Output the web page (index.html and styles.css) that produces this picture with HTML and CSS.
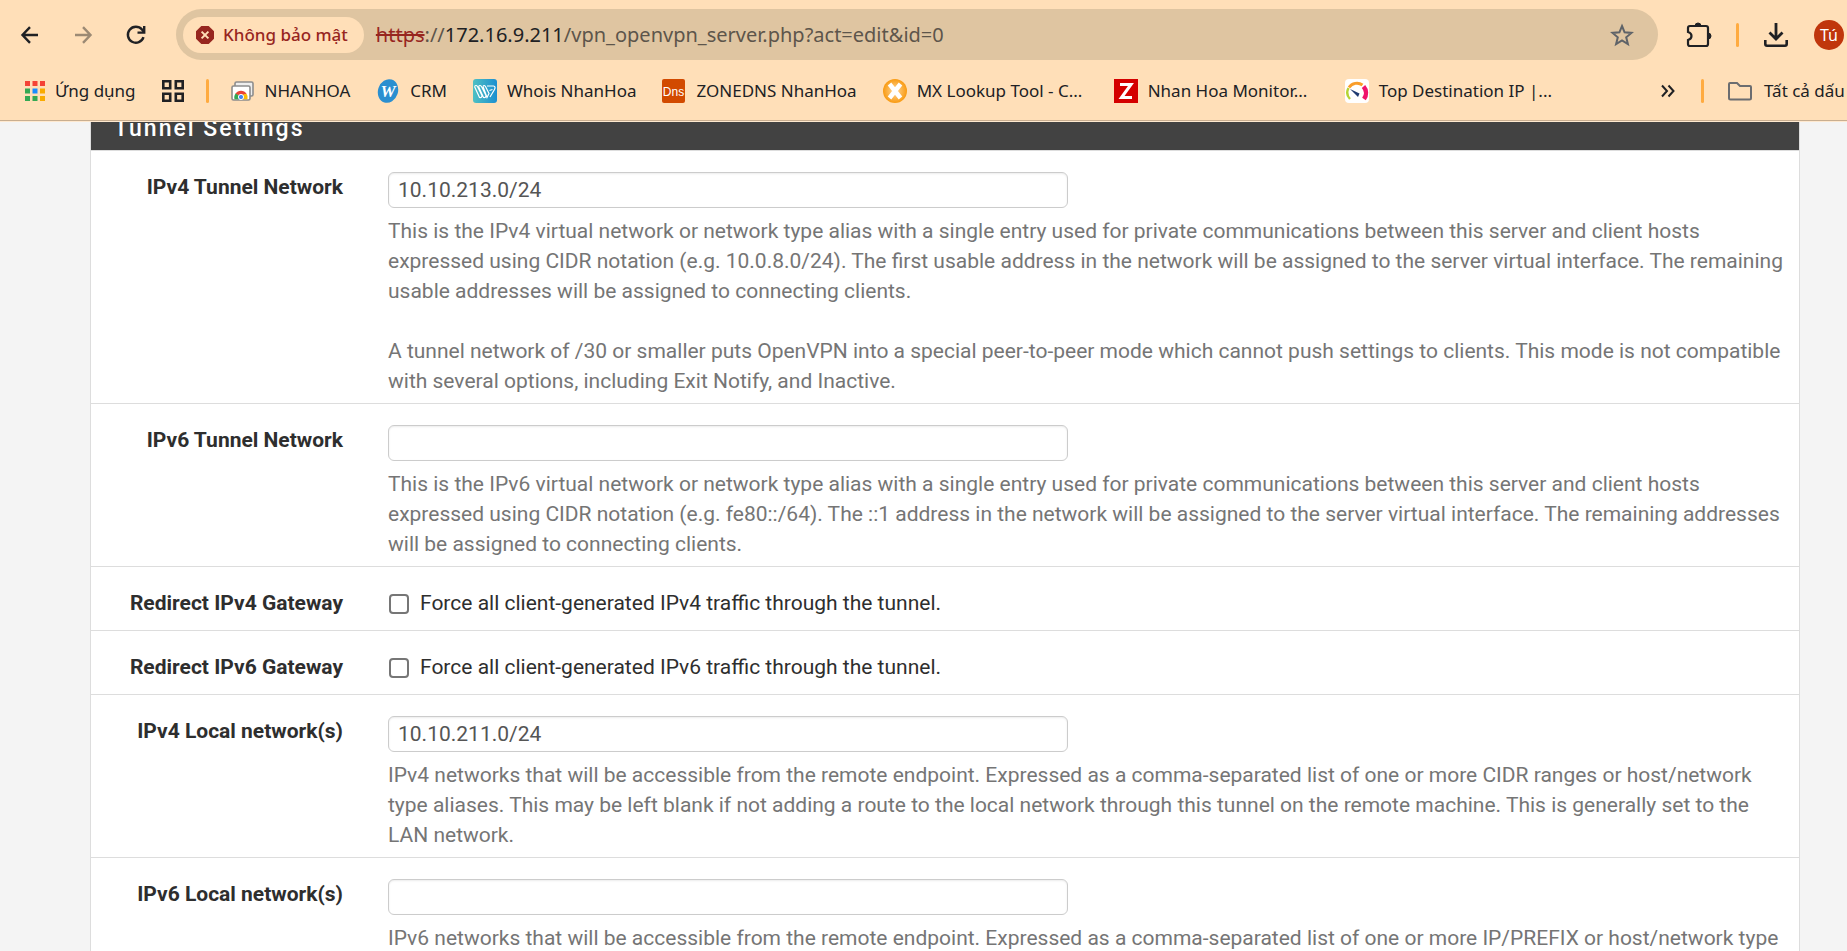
FILE: index.html
```html
<!DOCTYPE html>
<html lang="vi">
<head>
<meta charset="utf-8">
<title>OpenVPN Server</title>
<link rel="stylesheet" href="styles.css">
</head>
<body>
<header class="browser">
  <div class="toolbar">
    <button class="tool back" aria-label="Back"><svg width="20" height="20" viewBox="0 0 20 20"><path d="M18 10H3M10 2.200 2.500 10 10 17.800" fill="none" stroke="#202124" stroke-width="2.400"/></svg></button>
    <button class="tool forward" aria-label="Forward"><svg width="20" height="20" viewBox="0 0 20 20"><path d="M2 10H17M10 2.200 17.500 10 10 17.800" fill="none" stroke="#9c8a74" stroke-width="2.400"/></svg></button>
    <button class="tool reload" aria-label="Reload"><svg width="20" height="20" viewBox="0 0 20 20"><path d="M17.500 12.200A8 8 0 1 1 16 4.600L17.500 6.500" fill="none" stroke="#202124" stroke-width="2.400"/><path d="M18.200 1V7.600H11.500" fill="none" stroke="#202124" stroke-width="2.400"/></svg></button>
    <div class="omnibox">
      <button class="security"><svg width="18" height="18" viewBox="0 0 18 18"><path d="M5.300 0H12.700L18 5.300V12.700L12.700 18H5.300L0 12.700V5.300Z" fill="#97261f"/><path d="M5.600 5.600 12.400 12.400M12.400 5.600 5.600 12.400" stroke="#ffdfb8" stroke-width="2"/></svg>Không bảo mật</button>
      <div class="url"><s>https</s>://<b>172.16.9.211</b>/vpn_openvpn_server.php?act=edit&amp;id=0</div>
      <button class="star" aria-label="Bookmark"><svg width="24" height="24" viewBox="0 0 24 24"><path d="M12 3 14.600 9.300 21.500 9.900 16.200 14.300 17.900 21 12 17.400 6.100 21 7.800 14.300 2.500 9.900 9.400 9.300Z" fill="none" stroke="#5f6368" stroke-width="2"/></svg></button>
    </div>
    <button class="ext" aria-label="Extensions"><svg width="26" height="26" viewBox="0 0 26 26"><path d="M4 4H20Q22 4 22 6V22Q22 24 20 24H4Q2 24 2 22V18Q5.500 17 5.500 14T2 10V6Q2 4 4 4Z" fill="none" stroke="#202124" stroke-width="2.200"/><path d="M9 4A3 3 0 0 1 15 4ZM22 11A3 3 0 0 1 22 17Z" fill="#202124" stroke="#202124"/></svg></button>
    <span class="divider"></span>
    <button class="download" aria-label="Downloads"><svg width="24" height="24" viewBox="0 0 24 24"><path d="M12 0V16M5.500 9.500 12 16 18.500 9.500" fill="none" stroke="#202124" stroke-width="2.800"/><path d="M1.300 17V21Q1.300 22.700 3 22.700H21Q22.700 22.700 22.700 21V17" fill="none" stroke="#202124" stroke-width="2.600"/></svg></button>
    <button class="avatar">Tú</button>
  </div>
  <nav class="bookmarks">
    <a class="mark apps" href="#"><svg width="20" height="20" viewBox="0 0 20 20"><path d="M0 0H5V5H0ZM7.500 0H12.500V5H7.500ZM15 0H20V5H15Z" fill="#f44336"/><path d="M0 7.500H5V12.500H0ZM0 15H5V20H0ZM7.500 15H12.500V20H7.500Z" fill="#34a853"/><path d="M7.500 7.500H12.500V12.500H7.500Z" fill="#1a8cff"/><path d="M15 7.500H20V12.500H15ZM15 15H20V20H15Z" fill="#f9ab00"/></svg><span>Ứng dụng</span></a>
    <button class="tabs" aria-label="Tab groups"><svg width="22" height="22" viewBox="0 0 22 22"><path d="M1.300 1.300H8.200V8.200H1.300ZM13.800 1.300H20.700V8.200H13.800ZM1.300 13.800H8.200V20.700H1.300ZM13.800 13.800H20.700V20.700H13.800Z" fill="none" stroke="#202124" stroke-width="2.600"/></svg></button>
    <span class="divider"></span>
    <a class="mark" href="#"><svg width="24" height="24" viewBox="0 0 24 24"><rect x="4" y="3" width="18" height="14" rx="1.500" fill="#eee" stroke="#8d8d8d" stroke-width="1.600"/><rect x="1" y="7" width="18" height="14" rx="1.500" fill="#fff" stroke="#8d8d8d" stroke-width="1.600"/><path d="M3.500 20.200A6.500 6.500 0 0 1 5 14L10 18V20.200Z" fill="#34a853"/><path d="M4.500 14.800A6.500 6.500 0 0 1 15.500 14.800L10 17Z" fill="#ea4335"/><path d="M15.500 14.800A6.500 6.500 0 0 1 16.500 20.200H10V16Z" fill="#fbbc05"/><circle cx="10" cy="18" r="2.600" fill="#4285f4" stroke="#fff"/></svg><span>NHANHOA</span></a>
    <a class="mark" href="#"><svg width="24" height="24" viewBox="0 0 24 24"><ellipse cx="12" cy="12" rx="10" ry="12" transform="rotate(18 12 12)" fill="#2b8fd0"/><text x="12" y="18" text-anchor="middle" class="serif">W</text></svg><span>CRM</span></a>
    <a class="mark" href="#"><svg width="24" height="24" viewBox="0 0 24 24"><defs><linearGradient id="wh"><stop stop-color="#4fc0c3"/><stop offset="1" stop-color="#1d8fd0"/></linearGradient></defs><rect width="24" height="24" rx="3" fill="url(#wh)"/><path d="M1.500 7.500Q3 5.500 4.500 7.500L9 16.500Q9 19 6.500 18.500L1.500 7.500M5.500 7.500Q7 5.500 8.500 7.500L13 16.500Q13 19 10.500 18.500L5.500 7.500M10 7.500Q11 5.500 12.500 7.500L16 14.500 14 18.500 10 7.500M14 7H20.500Q23 7.500 21.500 10.500L17 18M16.500 11.500 19.500 10.500" fill="none" stroke="#fff" stroke-width="1.200"/></svg><span>Whois NhanHoa</span></a>
    <a class="mark" href="#"><svg width="24" height="24" viewBox="0 0 24 24"><rect width="23" height="24" rx="2" fill="#d24a00"/><text x="11.500" y="16.500" text-anchor="middle" class="dns">Dns</text></svg><span>ZONEDNS NhanHoa</span></a>
    <a class="mark wide" href="#"><svg width="24" height="24" viewBox="0 0 24 24"><defs><radialGradient id="mx"><stop stop-color="#ffd9a0"/><stop offset="1" stop-color="#f99b12"/></radialGradient></defs><circle cx="12" cy="12" r="12" fill="url(#mx)"/><path d="M6.500 5 17.500 19M17.500 5 6.500 19" stroke="#fff" stroke-width="4.500"/></svg><span>MX Lookup Tool - C...</span></a>
    <a class="mark wide" href="#"><svg width="24" height="24" viewBox="0 0 24 24"><rect width="24" height="24" fill="#d40000"/><path d="M6 5.500H17L7.500 18.500H18" fill="none" stroke="#fff" stroke-width="3"/></svg><span>Nhan Hoa Monitor...</span></a>
    <a class="mark" href="#"><svg width="24" height="24" viewBox="0 0 24 24"><rect width="24" height="24" rx="4" fill="#fff"/><path d="M5 20A9.500 9.500 0 0 1 3.500 9" fill="none" stroke="#b5d334" stroke-width="2.500"/><path d="M4 8.500A9.500 9.500 0 0 1 17.500 6" fill="none" stroke="#f99d2a" stroke-width="3"/><path d="M18.500 7.500A10 10 0 0 1 19 20" fill="none" stroke="#f0136b" stroke-width="4.500"/><path d="M5 10 14.500 14.500 13 18Z" fill="#1f3b70"/></svg><span>Top Destination IP |...</span></a>
    <button class="more" aria-label="More bookmarks"><svg width="14" height="14" viewBox="0 0 14 14"><path d="M1 1.500 6 7 1 12.500M7.500 1.500 12.500 7 7.500 12.500" fill="none" stroke="#202124" stroke-width="2"/></svg></button>
    <span class="divider"></span>
    <a class="mark all" href="#"><svg width="24" height="24" viewBox="0 0 24 24"><path d="M2 4H9L12 7H22Q23 7 23 8V19Q23 20.500 21.500 20.500H2.500Q1 20.500 1 19V5Q1 4 2 4Z" fill="none" stroke="#6b6d70" stroke-width="2"/></svg><span>Tất cả dấu trang</span></a>
  </nav>
</header>
<main class="page">
  <form class="panel">
    <div class="panel-title"><h2>Tunnel Settings</h2></div>
    <div class="row">
      <label class="name" for="tn4">IPv4 Tunnel Network</label>
      <div class="field">
        <input class="text" id="tn4" type="text" value="10.10.213.0/24">
        <p class="help">This is the IPv4 virtual network or network type alias with a single entry used for private communications between this server and client hosts expressed using CIDR notation (e.g. 10.0.8.0/24). The first usable address in the network will be assigned to the server virtual interface. The remaining usable addresses will be assigned to connecting clients.<br><br>A tunnel network of /30 or smaller puts OpenVPN into a special peer-to-peer mode which cannot push settings to clients. This mode is not compatible with several options, including Exit Notify, and Inactive.</p>
      </div>
    </div>
    <div class="row">
      <label class="name" for="tn6">IPv6 Tunnel Network</label>
      <div class="field">
        <input class="text" id="tn6" type="text">
        <p class="help">This is the IPv6 virtual network or network type alias with a single entry used for private communications between this server and client hosts expressed using CIDR notation (e.g. fe80::/64). The ::1 address in the network will be assigned to the server virtual interface. The remaining addresses will be assigned to connecting clients.</p>
      </div>
    </div>
    <div class="row tick">
      <span class="name">Redirect IPv4 Gateway</span>
      <label class="check"><input type="checkbox">Force all client-generated IPv4 traffic through the tunnel.</label>
    </div>
    <div class="row tick">
      <span class="name">Redirect IPv6 Gateway</span>
      <label class="check"><input type="checkbox">Force all client-generated IPv6 traffic through the tunnel.</label>
    </div>
    <div class="row">
      <label class="name" for="ln4">IPv4 Local network(s)</label>
      <div class="field">
        <input class="text" id="ln4" type="text" value="10.10.211.0/24">
        <p class="help">IPv4 networks that will be accessible from the remote endpoint. Expressed as a comma-separated list of one or more CIDR ranges or host/network type aliases. This may be left blank if not adding a route to the local network through this tunnel on the remote machine. This is generally set to the LAN network.</p>
      </div>
    </div>
    <div class="row">
      <label class="name" for="ln6">IPv6 Local network(s)</label>
      <div class="field">
        <input class="text" id="ln6" type="text">
        <p class="help">IPv6 networks that will be accessible from the remote endpoint. Expressed as a comma-separated list of one or more IP/PREFIX or host/network type</p>
      </div>
    </div>
  </form>
</main>
</body>
</html>
```

FILE: styles.css
```css
* { box-sizing: border-box; }
html, body { height: 100%; }
body {
  margin: 0;
  display: flex;
  flex-direction: column;
  overflow: hidden;
  background: #f4f4f4;
  font-family: Roboto, sans-serif;
  font-size: 21px;
  line-height: 30px;
  color: #2e2e2e;
}
button {
  padding: 0;
  border: 0;
  background: none;
  font: inherit;
  color: inherit;
}
svg { display: block; flex: none; }

.browser {
  flex: none;
  background: #ffdfb8;
  border-bottom: 1px solid #ffe9cf;
  font-family: "Noto Sans", sans-serif;
  color: #202124;
  box-shadow: inset 0 -1px #c9ae90;
}
.toolbar {
  display: flex;
  align-items: center;
  padding: 9px 0 0 20px;
}
.tool { margin-right: 33px; }
.reload { margin-right: 30px; }
.omnibox {
  flex: 1;
  display: flex;
  align-items: center;
  height: 51px;
  padding: 0 24px 0 7px;
  border-radius: 26px;
  background: #dfc5a1;
}
.security {
  flex: none;
  display: flex;
  align-items: center;
  gap: 9px;
  height: 36px;
  padding: 0 16px 0 13px;
  border-radius: 18px;
  background: #ffdfb8;
  color: #97261f;
  font-size: 17px;
  font-weight: 500;
}
.url {
  flex: 1;
  margin-left: 12px;
  font-size: 20px;
  color: #5d554b;
  white-space: nowrap;
}
.url s { color: #97261f; }
.url b { font-weight: 400; color: #202124; }
.ext { margin: 0 24px 0 28px; }
.divider {
  flex: none;
  width: 3px;
  height: 24px;
  border-radius: 2px;
  background: #ffab40;
}
.download { margin: 0 26px 0 25px; }
.avatar {
  width: 30px;
  height: 30px;
  margin-right: 3px;
  border-radius: 50%;
  background: #c0360c;
  color: #fff;
  font-size: 16px;
}
.bookmarks {
  display: flex;
  align-items: center;
  height: 61px;
  padding-left: 25px;
  font-size: 17px;
  white-space: nowrap;
  overflow: hidden;
}
.mark {
  flex: none;
  display: flex;
  align-items: center;
  gap: 10px;
  margin-right: 26px;
  color: inherit;
  text-decoration: none;
}
.wide { width: 205px; }
.tabs { margin-right: 22px; }
.bookmarks .tabs + .divider { margin-right: 22px; }
.more { margin: 0 26px 0 auto; }
.more + .divider { margin-right: 24px; }
.all { gap: 12px; width: 119px; margin-right: 0; }
.serif { font: italic bold 17px "Liberation Serif", serif; fill: #fff; }
.dns { font: 12px "Liberation Sans", sans-serif; fill: #fff; }

.page {
  flex: 1;
  min-height: 0;
  overflow: hidden;
  padding: 0 47px 0 90px;
}
.panel {
  border: 1px solid #ddd;
  border-top: 0;
  background: #fff;
}
.panel-title {
  display: flex;
  align-items: flex-end;
  height: 29px;
  padding: 0 23px 6px;
  overflow: hidden;
  background: #424242;
  border-bottom: 1px solid #ddd;
}
.panel-title h2 {
  margin: 0;
  font-size: 23px;
  line-height: 30px;
  font-weight: 500;
  letter-spacing: 2px;
  color: #fff;
}
.row {
  display: grid;
  grid-template-columns: 252px 1fr;
  column-gap: 45px;
  padding: 21px 14px 7px 0;
  border-bottom: 1px solid #ddd;
}
.tick { padding-bottom: 12px; }
.name {
  text-align: right;
  font-weight: 700;
}
.text {
  display: block;
  width: 100%;
  max-width: 680px;
  height: 36px;
  padding: 0 9px;
  border: 1px solid #ccc;
  border-radius: 6px;
  background: #fff;
  box-shadow: inset 0 1px 2px rgba(0, 0, 0, .08);
  font: inherit;
  color: #555;
}
.help {
  margin: 8px 0 0;
  color: #757575;
}
.check {
  display: flex;
  align-items: center;
  gap: 11px;
}
.check input {
  appearance: none;
  width: 20px;
  height: 20px;
  margin: 2px 0 0 1px;
  border: 2px solid #767676;
  border-radius: 4px;
  background: #fff;
}
```
